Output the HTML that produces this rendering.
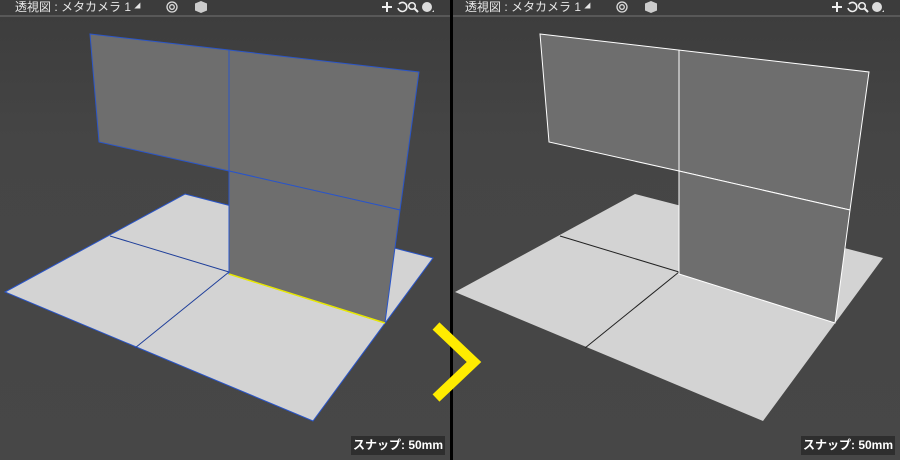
<!DOCTYPE html>
<html><head><meta charset="utf-8"><style>
body{margin:0;width:900px;height:460px;overflow:hidden;background:#000;font-family:"Liberation Sans","Noto Sans CJK JP",sans-serif}
.hdr{position:absolute;top:0;height:15px;background:#3c3c3c;border-bottom:2px solid #585858;color:#e6e6e6;font-size:12px;line-height:15px}
.tri{font-size:6px;vertical-align:bottom}
.snap{position:absolute;top:436px;width:94px;height:19px;background:#2e2e2e;color:#fff;font-size:12px;font-weight:bold;line-height:19px;text-align:center}
</style></head><body>
<svg width="900" height="460" style="position:absolute;left:0;top:0">
<defs><linearGradient id="bg" x1="0" y1="0" x2="0" y2="1"><stop offset="0" stop-color="#3c3c3c"/><stop offset="0.3" stop-color="#454545"/><stop offset="1" stop-color="#474747"/></linearGradient>
<g id="icons">
<circle cx="0" cy="0" r="5" fill="none" stroke="#ddd" stroke-width="1.3"/><circle cx="0" cy="0" r="2.3" fill="none" stroke="#ddd" stroke-width="1.3"/>
<polygon points="29,-6 35,-3.5 35,3.5 29,6 23,3.5 23,-3.5" fill="#ccc"/>
</g>
<g id="tools">
<path d="M0,-5V5M-5,0H5" stroke="#eee" stroke-width="2"/>
<path d="M12,-3a4.5,4.5 0 1 1 -1,4" fill="none" stroke="#eee" stroke-width="1.6"/>
<circle cx="25" cy="-1" r="3.3" fill="none" stroke="#eee" stroke-width="1.5"/><path d="M27.5,1.5L31,5" stroke="#eee" stroke-width="2"/>
<circle cx="40" cy="0" r="5" fill="#ddd"/><path d="M45,5h2v-2z" fill="#ddd"/>
</g></defs>
<rect x="0" y="0" width="450" height="460" fill="url(#bg)"/>
<rect x="453" y="0" width="447" height="460" fill="url(#bg)"/>
<g>
<polygon points="5,292 185,194 433,258 313,421" fill="#d3d3d3" stroke="#2a55c8" stroke-width="1"/>
<line x1="110" y1="236" x2="229" y2="272" stroke="#1f3f9a"/>
<line x1="229" y1="272" x2="135" y2="348" stroke="#1f3f9a"/>
<polygon points="90,34 419,72 400,210 229,171 99,142" fill="#6e6e6e" stroke="#2a55c8"/>
<polygon points="229,171 400,210 385,323 229,274" fill="#6e6e6e" stroke="#2a55c8"/>
<line x1="229" y1="50" x2="229" y2="274" stroke="#2a55c8"/>
<line x1="229" y1="274" x2="385" y2="323" stroke="#e8e800" stroke-width="1.5"/>
</g>
<g>
<polygon points="455,292 635,194 883,258 763,421" fill="#d3d3d3"/>
<line x1="560" y1="236" x2="679" y2="272" stroke="#222"/>
<line x1="679" y1="272" x2="585" y2="348" stroke="#222"/>
<polygon points="540,34 869,72 850,210 679,171 549,142" fill="#6e6e6e" stroke="#fff"/>
<polygon points="679,171 850,210 835,323 679,274" fill="#6e6e6e" stroke="#fff"/>
<line x1="679" y1="50" x2="679" y2="274" stroke="#fff"/>
</g>
<rect x="450" y="0" width="3" height="460" fill="#000"/>
<polyline points="436,326 474,362 436,398" fill="none" stroke="#ffec00" stroke-width="10"/>
</svg>
<div class="hdr" style="left:0;width:450px"><span style="position:absolute;left:15px">透視図 : メタカメラ 1 <span class="tri">◢</span></span></div>
<div class="hdr" style="left:453px;width:447px"><span style="position:absolute;left:12px">透視図 : メタカメラ 1 <span class="tri">◢</span></span></div>
<svg width="900" height="16" style="position:absolute;left:0;top:0">
<use href="#icons" x="172" y="7"/><use href="#icons" x="622" y="7"/>
<use href="#tools" x="387" y="7"/><use href="#tools" x="837" y="7"/>
</svg>
<div class="snap" style="left:351px">スナップ: 50mm</div>
<div class="snap" style="left:801px">スナップ: 50mm</div>
</body></html>
